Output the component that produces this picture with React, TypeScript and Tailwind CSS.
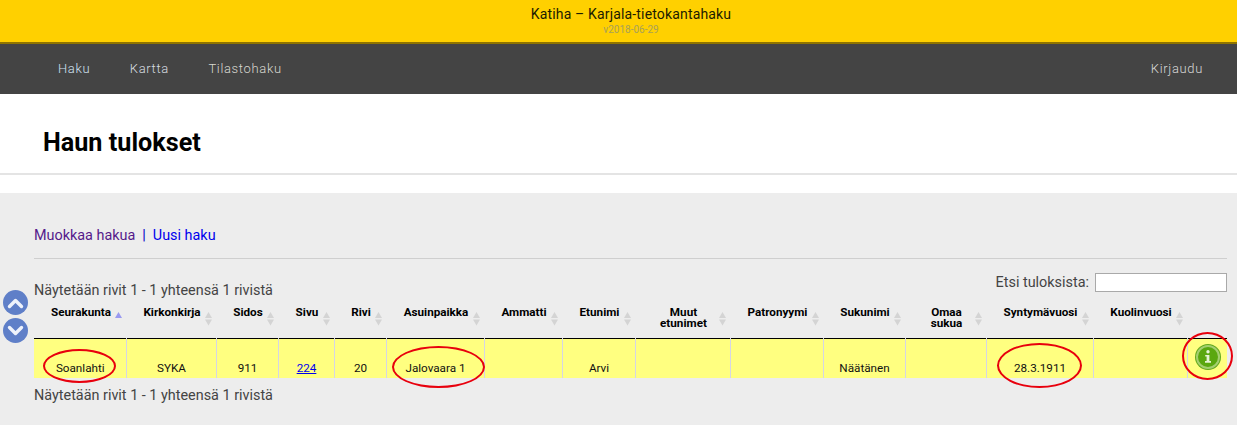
import React from "react";

const cols: { label: React.ReactNode; w: number; value?: React.ReactNode; active?: boolean }[] = [
  { label: "Seurakunta", w: 92, value: "Soanlahti", active: true },
  { label: "Kirkonkirja", w: 90, value: "SYKA" },
  { label: "Sidos", w: 62, value: "911" },
  { label: "Sivu", w: 56, value: <a href="#" className="text-[#0000ee] underline">224</a> },
  { label: "Rivi", w: 52, value: "20" },
  { label: "Asuinpaikka", w: 98, value: "Jalovaara 1" },
  { label: "Ammatti", w: 78 },
  { label: "Etunimi", w: 73, value: "Arvi" },
  { label: <>Muut<br />etunimet</>, w: 95 },
  { label: "Patronyymi", w: 93 },
  { label: "Sukunimi", w: 82, value: "Näätänen" },
  { label: <>Omaa<br />sukua</>, w: 81 },
  { label: "Syntymävuosi", w: 107, value: "28.3.1911" },
  { label: "Kuolinvuosi", w: 94 },
];

function SortIcon({ active }: { active?: boolean }) {
  return (
    <svg width="7" height="15" viewBox="0 0 7 15" className="absolute right-[4px] top-[8px]" aria-hidden="true">
      <path d="M3.5 1 L7 7 L0 7 Z" fill={active ? "#9a9af0" : "#d4d4d4"} />
      {!active && <path d="M0 8.5 L7 8.5 L3.5 14.5 Z" fill="#d4d4d4" />}
    </svg>
  );
}

function Ring({ className }: { className: string }) {
  return <div className={`absolute rounded-[50%] border-[2px] border-[#e8000d] pointer-events-none ${className}`} />;
}

function Chevron({ up }: { up?: boolean }) {
  return (
    <div className="w-[25px] h-[25px] rounded-full bg-[#5f7fc8] flex items-center justify-center">
      <svg width="17" height="12" viewBox="0 0 17 12" aria-hidden="true">
        <path d={up ? "M2.5 9.5 L8.5 3.5 L14.5 9.5" : "M2.5 2.5 L8.5 8.5 L14.5 2.5"} fill="none" stroke="#eef2fb" strokeWidth="3.4" strokeLinecap="round" strokeLinejoin="round" />
      </svg>
    </div>
  );
}

export default function App() {
  return (
    <div className="relative w-[1237px] h-[425px] overflow-hidden bg-white font-['Roboto',sans-serif] text-black">
      <header className="h-[44px] bg-[#ffd000] border-b-2 border-[#8f7400] flex flex-col items-center pt-[6px] pl-[25px]">
        <div className="text-[14px] leading-[17px] text-[#1c1c00] tracking-[0.16px]">Katiha – Karjala-tietokantahaku</div>
        <div className="text-[10px] leading-[12px] text-[#a8a05a] mt-[1px]">v2018-06-29</div>
      </header>
      <nav className="h-[50px] bg-[#444444] flex items-center justify-between pl-[58px] pr-[34px] text-[13px] tracking-[0.65px] text-[#d4d4d4] font-light">
        <div className="flex gap-[39.5px]">
          <a className="text-[#cfe0f0]">Haku</a>
          <a className="text-[#d8dde0]">Kartta</a>
          <a className="text-[#d8d8d0]">Tilastohaku</a>
        </div>
        <a className="text-[#d8d8d8]">Kirjaudu</a>
      </nav>
      <section className="h-[79px] pl-[43px] pt-[33px]">
        <h1 className="text-[25.2px] leading-[32px] font-bold">Haun tulokset</h1>
      </section>
      <div className="h-[2px] bg-[#e4e4e4]" />
      <div className="h-[18px]" />
      <main className="relative h-[232px] bg-[#ededed] px-[34px] pt-[33px] text-[14.4px] text-[#444]">
        <div className="h-[19px] leading-[19px] flex items-center">
          <a href="#" className="text-[#551a8b]">Muokkaa hakua</a>
          <span className="mx-[7px] text-[#0000c8]">|</span>
          <a href="#" className="text-[#0000ee]">Uusi haku</a>
        </div>
        <div className="mt-[13px] h-px w-[1193px] bg-[#cfcfcf]" />
        <div className="mt-[14px] flex justify-between items-start w-[1193px] h-[30px]">
          <div className="mt-[8px] leading-[20px]">Näytetään rivit 1 - 1 yhteensä 1 rivistä</div>
          <label className="flex items-center gap-[6px] leading-[18px]">
            Etsi tuloksista:
            <input className="w-[132px] h-[19px] bg-white border border-[#a9a9a9]" />
          </label>
        </div>

        <table className="table-fixed border-collapse w-[1193px] text-[11.7px] text-black">
          <colgroup>
            {cols.map((c, i) => <col key={i} style={{ width: c.w }} />)}
            <col style={{ width: 40 }} />
          </colgroup>
          <thead>
            <tr className="h-[35px] border-b border-black">
              {cols.map((c, i) => (
                <th key={i} className="relative align-top p-0 pl-[2px] pt-[4px] font-bold leading-[11px] text-center">
                  {c.label}
                  <SortIcon active={c.active} />
                </th>
              ))}
              <th className="p-0" />
            </tr>
          </thead>
          <tbody>
            <tr className="h-[39px] bg-[#ffff80]">
              {cols.map((c, i) => (
                <td key={i} className="p-0 pl-[1px] pt-[19px] text-center align-top leading-[20px] border-r border-[#d5d5e5] text-[#111]">
                  {c.value}
                </td>
              ))}
              <td className="p-0 align-top">
                <div className="ml-[7px] mt-[5px] w-[26px] h-[26px] rounded-full bg-[#62a81c] p-[1px]">
                  <div className="w-full h-full rounded-full bg-[#5aa70f] border-[2px] border-[#a4cf70] flex items-center justify-center">
                    <svg width="8" height="13" viewBox="0 0 8 13" aria-hidden="true">
                      <circle cx="4" cy="1.8" r="1.7" fill="#e6f3d4" />
                      <path d="M1.2 5 H5.4 V11 H7 V12.8 H1 V11 H2.6 V6.6 H1.2 Z" fill="#e6f3d4" />
                    </svg>
                  </div>
                </div>
              </td>
            </tr>
          </tbody>
        </table>
        <div className="mt-[8px] leading-[20px]">Näytetään rivit 1 - 1 yhteensä 1 rivistä</div>

        <div className="absolute left-[3px] top-[97px] flex flex-col gap-[3px]">
          <Chevron up />
          <Chevron />
        </div>

        <Ring className="left-[43px] top-[156px] w-[73px] h-[34px]" />
        <Ring className="left-[392px] top-[153px] w-[93px] h-[42px]" />
        <Ring className="left-[997px] top-[150px] w-[85px] h-[45px]" />
        <Ring className="left-[1182px] top-[139px] w-[51px] h-[48px]" />
      </main>
    </div>
  );
}
